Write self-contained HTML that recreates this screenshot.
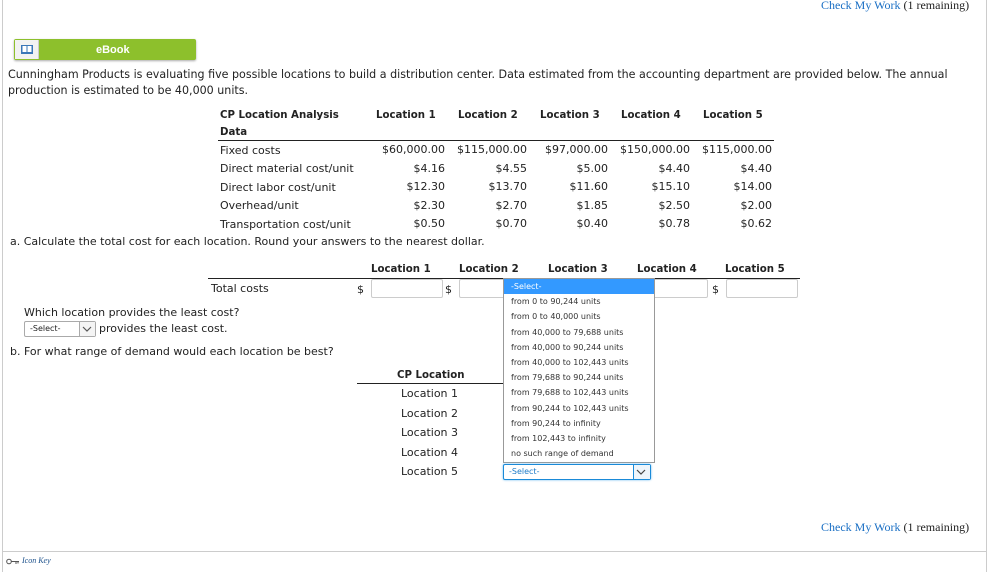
<!DOCTYPE html>
<html><head><meta charset="utf-8"><style>
*{margin:0;padding:0;box-sizing:border-box}
body{width:989px;height:572px;background:#fff;position:relative;overflow:hidden;font-family:"DejaVu Sans","Liberation Sans",sans-serif;font-size:11px;color:#222}
.a{position:absolute;white-space:nowrap}
.b{font-weight:bold;font-size:10.2px}
.r{text-align:right}
.serif{font-family:"Liberation Serif",serif;font-size:12px}
.lnk{color:#1a6fc4}
.inp{position:absolute;height:19px;border:1px solid #ccc;border-radius:2px;background:#fff}
.dd div{height:15.2px;line-height:15px;padding-left:7px;font-size:8px;color:#333}
</style></head><body>
<div class="a" style="left:2px;top:0;width:1px;height:572px;background:#ccc"></div>
<div class="a" style="left:986px;top:0;width:1px;height:572px;background:#ccc"></div>
<div class="a" style="left:2px;top:551px;width:985px;height:1px;background:#ccc"></div>

<div class="a serif" style="left:821px;top:-2px"><span class="lnk">Check My Work</span> (1 remaining)</div>
<div class="a serif" style="left:821px;top:520px"><span class="lnk">Check My Work</span> (1 remaining)</div>

<div class="a" style="left:14px;top:39px;width:182px;height:21px;background:#8dc02c;border-radius:2px;box-shadow:0 1px 2px #aaa"></div>
<div class="a" style="left:15px;top:40px;width:24px;height:19px;background:#f2f2f2;border-right:1px solid #ccc"></div>
<svg class="a" style="left:20px;top:44px" width="14" height="11"><rect x="1" y="1" width="12" height="9" fill="#3a77b8"/><rect x="2.5" y="2" width="4" height="6" fill="#fff"/><rect x="7.5" y="2" width="4" height="6" fill="#fff"/></svg>
<div class="a" style="left:96px;top:44px;color:#fff;font-size:11px;font-weight:bold;font-family:'Liberation Sans',sans-serif">eBook</div>

<div class="a" style="left:8px;top:68px;font-size:11.1px">Cunningham Products is evaluating five possible locations to build a distribution center. Data estimated from the accounting department are provided below. The annual</div>
<div class="a" style="left:8px;top:84px;font-size:11.1px">production is estimated to be 40,000 units.</div>

<div class="a b" style="left:220px;top:110px">CP Location Analysis</div>
<div class="a b" style="left:220px;top:127px">Data</div>
<div class="a b" style="left:376px;top:110px">Location 1</div>
<div class="a b" style="left:458px;top:110px">Location 2</div>
<div class="a b" style="left:540px;top:110px">Location 3</div>
<div class="a b" style="left:621px;top:110px">Location 4</div>
<div class="a b" style="left:703px;top:110px">Location 5</div>
<div class="a" style="left:218px;top:140px;width:556px;height:1px;background:#222"></div>

<div class="a" style="left:220px;top:144px">Fixed costs</div>
<div class="a" style="left:220px;top:162px">Direct material cost/unit</div>
<div class="a" style="left:220px;top:181px">Direct labor cost/unit</div>
<div class="a" style="left:220px;top:199px">Overhead/unit</div>
<div class="a" style="left:220px;top:218px">Transportation cost/unit</div>

<div class="a r" style="left:345px;width:100px;top:141px;line-height:18.6px">$60,000.00<br>$4.16<br>$12.30<br>$2.30<br>$0.50</div>
<div class="a r" style="left:427px;width:100px;top:141px;line-height:18.6px">$115,000.00<br>$4.55<br>$13.70<br>$2.70<br>$0.70</div>
<div class="a r" style="left:508px;width:100px;top:141px;line-height:18.6px">$97,000.00<br>$5.00<br>$11.60<br>$1.85<br>$0.40</div>
<div class="a r" style="left:590px;width:100px;top:141px;line-height:18.6px">$150,000.00<br>$4.40<br>$15.10<br>$2.50<br>$0.78</div>
<div class="a r" style="left:672px;width:100px;top:141px;line-height:18.6px">$115,000.00<br>$4.40<br>$14.00<br>$2.00<br>$0.62</div>

<div class="a" style="left:10px;top:235px">a. Calculate the total cost for each location. Round your answers to the nearest dollar.</div>

<div class="a b" style="left:371px;top:264px">Location 1</div>
<div class="a b" style="left:459px;top:264px">Location 2</div>
<div class="a b" style="left:548px;top:264px">Location 3</div>
<div class="a b" style="left:637px;top:264px">Location 4</div>
<div class="a b" style="left:725px;top:264px">Location 5</div>
<div class="a" style="left:208px;top:278px;width:592px;height:1px;background:#222"></div>
<div class="a" style="left:211px;top:282px">Total costs</div>
<div class="a" style="left:357px;top:283px">$</div>
<div class="inp" style="left:371px;top:279px;width:72px"></div>
<div class="a" style="left:445px;top:283px">$</div>
<div class="inp" style="left:459px;top:279px;width:60px"></div>
<div class="inp" style="left:640px;top:279px;width:68px"></div>
<div class="a" style="left:712px;top:283px">$</div>
<div class="inp" style="left:726px;top:279px;width:72px"></div>

<div class="a" style="left:24px;top:306px">Which location provides the least cost?</div>
<div class="a" style="left:24px;top:321px;width:72px;height:16px;border:1px solid #aaa;border-radius:2px;background:#fff"></div>
<div class="a" style="left:30px;top:324px;font-size:8px">-Select-</div>
<div class="a" style="left:79px;top:322px;width:16px;height:14px;border-left:1px solid #aaa;background:#f4f4f4"></div>
<svg class="a" style="left:82px;top:326px" width="10" height="6"><path d="M1 1 L5 5 L9 1" fill="none" stroke="#555" stroke-width="1.2"/></svg>
<div class="a" style="left:99px;top:322px">provides the least cost.</div>

<div class="a" style="left:10px;top:345px">b. For what range of demand would each location be best?</div>

<div class="a b" style="left:397px;top:370px">CP Location</div>
<div class="a" style="left:357px;top:383px;width:146px;height:1px;background:#222"></div>
<div class="a" style="left:401px;top:387px">Location 1</div>
<div class="a" style="left:401px;top:407px">Location 2</div>
<div class="a" style="left:401px;top:426px">Location 3</div>
<div class="a" style="left:401px;top:446px">Location 4</div>
<div class="a" style="left:401px;top:465px">Location 5</div>

<div class="a dd" style="left:503px;top:278px;width:152px;height:185px;border:1px solid #999;background:#fff">
<div style="background:#3399ff;color:#fff">-Select-</div>
<div>from 0 to 90,244 units</div>
<div>from 0 to 40,000 units</div>
<div>from 40,000 to 79,688 units</div>
<div>from 40,000 to 90,244 units</div>
<div>from 40,000 to 102,443 units</div>
<div>from 79,688 to 90,244 units</div>
<div>from 79,688 to 102,443 units</div>
<div>from 90,244 to 102,443 units</div>
<div>from 90,244 to infinity</div>
<div>from 102,443 to infinity</div>
<div>no such range of demand</div>
</div>
<div class="a" style="left:503px;top:464px;width:148px;height:16px;border:1px solid #1a8ad8;border-radius:2px;background:#fff;box-shadow:0 0 2px #6bb8ef"></div>
<div class="a" style="left:509px;top:467px;font-size:8px;color:#1a7ac8">-Select-</div>
<div class="a" style="left:633px;top:465px;width:17px;height:14px;border-left:1px solid #1a8ad8;background:#eef5fb"></div>
<svg class="a" style="left:636px;top:469px" width="10" height="6"><path d="M1 1 L5 5 L9 1" fill="none" stroke="#444" stroke-width="1.2"/></svg>

<svg class="a" style="left:6px;top:558px" width="14" height="7"><circle cx="3" cy="3.5" r="2.3" fill="none" stroke="#555" stroke-width="1"/><path d="M5.3 3.5 H13 M10 3.5 V6 M12 3.5 V5.5" stroke="#555" stroke-width="1"/></svg>
<div class="a" style="left:22px;top:556px;font-family:'Liberation Serif',serif;font-style:italic;font-size:8px;color:#1a4f8a">Icon Key</div>
</body></html>
